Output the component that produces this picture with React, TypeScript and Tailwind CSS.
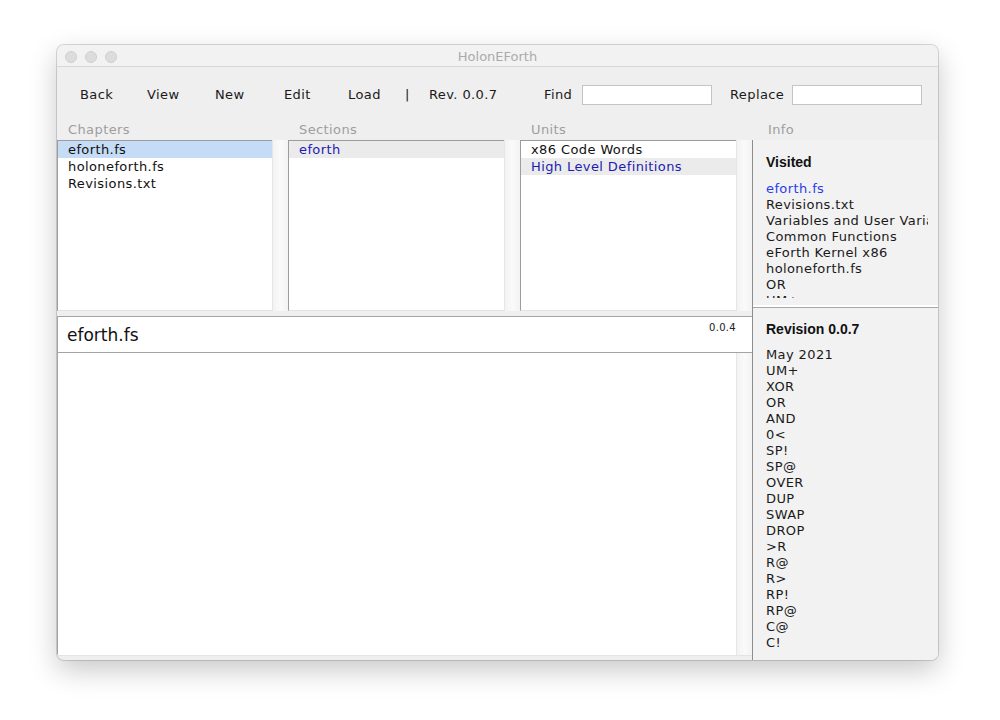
import React from "react";

const font = { fontFamily: '"DejaVu Sans", sans-serif' } as React.CSSProperties;

function ListPane({
  items,
  w,
}: {
  items: { text: string; bg?: string; color?: string }[];
  w: string;
}) {
  return (
    <div className="flex h-full shrink-0">
      <div className={`${w} h-full bg-white border-l border-t border-[#9c9c9c] border-b border-b-[#e2e2e2] overflow-hidden`}>
        {items.map((it, i) => (
          <div
            key={i}
            className={`h-[17px] leading-[17px] pl-[10px] whitespace-nowrap ${it.bg ?? ""} ${it.color ?? "text-[#111]"}`}
          >
            {it.text}
          </div>
        ))}
      </div>
      <div className="w-[16px] h-full bg-gradient-to-r from-[#f3f3f3] via-[#fafafa] to-[#f3f3f3] border-l border-[#e6e6e6]" />
    </div>
  );
}

export default function App() {
  const visited = [
    "Revisions.txt",
    "Variables and User Variables",
    "Common Functions",
    "eForth Kernel x86",
    "holoneforth.fs",
    "OR",
    "UM+",
  ];
  const revision = [
    "May 2021",
    "UM+",
    "XOR",
    "OR",
    "AND",
    "0<",
    "SP!",
    "SP@",
    "OVER",
    "DUP",
    "SWAP",
    "DROP",
    ">R",
    "R@",
    "R>",
    "RP!",
    "RP@",
    "C@",
    "C!",
  ];
  return (
    <div className="w-[1000px] h-[720px] bg-white pt-[45px] pl-[57px]" style={font}>
      <div className="w-[881px] h-[615px] rounded-[7px] bg-[#efefef] shadow-[0_10px_28px_rgba(0,0,0,0.22),0_0_0_1px_rgba(0,0,0,0.14)] flex flex-col overflow-hidden text-[13px] tracking-[0.4px] text-[#1a1a1a]">
        {/* Title bar */}
        <div className="h-[22px] shrink-0 border-b border-[#d8d8d8] bg-[#f2f2f2] relative flex items-center pt-[3px] pl-[8px] gap-[8px]">
          <div className="w-[12px] h-[12px] rounded-full bg-[#dcdcdc] border border-[#cfcfcf]" />
          <div className="w-[12px] h-[12px] rounded-full bg-[#dcdcdc] border border-[#cfcfcf]" />
          <div className="w-[12px] h-[12px] rounded-full bg-[#dcdcdc] border border-[#cfcfcf]" />
          <div className="absolute inset-0 pt-[3px] flex items-center justify-center text-[#ababab] text-[13px] tracking-normal">
            HolonEForth
          </div>
        </div>

        {/* Toolbar */}
        <div className="h-[54px] shrink-0 flex items-center pt-[2px] pl-[23px]">
          <span className="w-[67px]">Back</span>
          <span className="w-[68px]">View</span>
          <span className="w-[69px]">New</span>
          <span className="w-[64px]">Edit</span>
          <span className="w-[57px]">Load</span>
          <span className="w-[24px]">|</span>
          <span className="w-[115px]">Rev. 0.0.7</span>
          <span className="w-[38px]">Find</span>
          <div className="w-[130px] h-[20px] bg-white border border-[#c4c4c4]" />
          <span className="w-[18px]" />
          <span className="w-[62px]">Replace</span>
          <div className="w-[130px] h-[20px] bg-white border border-[#c4c4c4]" />
        </div>

        {/* Labels */}
        <div className="h-[19px] shrink-0 flex pt-[1px] text-[#9e9e9e] leading-[16px]">
          <span className="w-[231px] pl-[11px]">Chapters</span>
          <span className="w-[232px] pl-[11px]">Sections</span>
          <span className="w-[232px] pl-[11px]">Units</span>
          <span className="pl-[16px]">Info</span>
        </div>

        {/* Main */}
        <div className="flex-1 flex min-h-0">
          <div className="w-[695px] shrink-0 flex flex-col">
            <div className="h-[171px] flex">
              <ListPane
                w="w-[215px]"
                items={[
                  { text: "eforth.fs", bg: "bg-[#c5dcf6]" },
                  { text: "holoneforth.fs" },
                  { text: "Revisions.txt" },
                ]}
              />
              <ListPane w="w-[216px]" items={[{ text: "eforth", bg: "bg-[#ebebeb]", color: "text-[#1c1cb4]" }]} />
              <ListPane
                w="w-[216px]"
                items={[
                  { text: "x86 Code Words" },
                  { text: "High Level Definitions", bg: "bg-[#ebebeb]", color: "text-[#1c1cb4]" },
                ]}
              />
            </div>
            <div className="h-[5px]" />
            <div className="h-[37px] bg-white border-t border-b border-l border-[#a4a4a4] flex justify-between">
              <span className="pl-[9px] pt-[1px] text-[17px] tracking-normal leading-[35px] text-[#111]">eforth.fs</span>
              <span className="pr-[16px] pt-[3px] text-[10px] tracking-[0.3px] text-[#222]">0.0.4</span>
            </div>
            <div className="flex-1 flex">
              <div className="flex-1 bg-white border-l border-[#a4a4a4]" />
              <div className="w-[16px] bg-gradient-to-r from-[#f3f3f3] via-[#fafafa] to-[#f3f3f3] border-l border-[#e6e6e6]" />
            </div>
            <div className="h-[5px] border-t border-[#e4e4e4]" />
          </div>

          {/* Info column */}
          <div className="flex-1 min-w-0 flex flex-col border-l border-[#8e8e8e]">
            <div className="h-[165px] shrink-0 bg-[#f2f2f2] overflow-hidden pl-[13px] pr-[10px]">
              <div className="pt-[12px] h-[41px] font-bold text-[14px] tracking-normal text-[#111]" style={{ fontFamily: '"Liberation Sans", sans-serif' }}>
                Visited
              </div>
              <div className="h-[117px] leading-[16px] overflow-hidden whitespace-nowrap">
                <div className="text-[#2a3cf0]">eforth.fs</div>
                {visited.map((v, i) => (
                  <div key={i}>{v}</div>
                ))}
              </div>
            </div>
            <div className="h-[2px] bg-white" />
            <div className="flex-1 bg-[#f2f2f2] border-t border-[#a8a8a8] pl-[13px] pr-[10px] overflow-hidden">
              <div className="pt-[11px] h-[39px] font-bold text-[14px] tracking-normal text-[#111]" style={{ fontFamily: '"Liberation Sans", sans-serif' }}>
                Revision 0.0.7
              </div>
              <div className="leading-[16px] whitespace-nowrap">
                {revision.map((v, i) => (
                  <div key={i}>{v}</div>
                ))}
              </div>
            </div>
          </div>
        </div>
      </div>
    </div>
  );
}
